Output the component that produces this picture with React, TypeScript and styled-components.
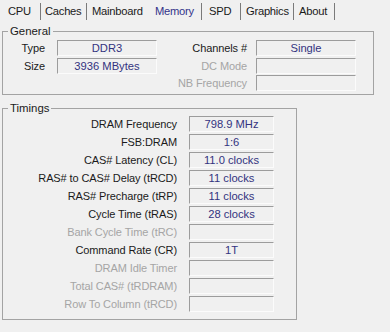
import React from 'react'
import styled, { createGlobalStyle } from 'styled-components'

const GlobalStyle = createGlobalStyle`
  html, body {
    margin: 0;
    padding: 0;
    background: #f0f0f0;
  }
  body {
    font-family: "Liberation Sans", Arial, sans-serif;
    font-size: 11px;
    color: #111;
  }
`

const Window = styled.div`
  width: 390px;
  height: 332px;
  padding-left: 2px;
  box-sizing: border-box;
  overflow: hidden;
`

const TabBar = styled.div`
  display: flex;
  height: 22px;
`

const Tab = styled.div<{ $w: number; $pl: number; $sep: boolean; $active?: boolean }>`
  box-sizing: border-box;
  width: ${(p) => p.$w}px;
  padding-left: ${(p) => p.$pl}px;
  margin-top: 3px;
  height: 17px;
  line-height: 17px;
  font-size: 11.2px;
  letter-spacing: -0.25px;
  color: ${(p) => (p.$active ? '#33338a' : '#1a1a1a')};
  border-right: ${(p) => (p.$sep ? '1px solid #7a7a7a' : 'none')};
  white-space: nowrap;
`

const Group = styled.fieldset<{ $w: number; $top: number }>`
  box-sizing: border-box;
  width: ${(p) => p.$w}px;
  margin: ${(p) => p.$top}px 0 0 0;
  padding: 0;
  border: 1px solid #a3a3a3;
  min-width: 0;
`

const Legend = styled.legend`
  margin-left: 5px;
  padding: 0 2px;
  font-size: 11.4px;
  line-height: 12px;
  color: #1a1a1a;
`

const GeneralGrid = styled.div`
  display: grid;
  grid-template-columns: 54px 100px 99px 100px;
  grid-auto-rows: 16px;
  row-gap: 1.5px;
  padding: 3px 0 3px 0;
`

const TimingsGrid = styled.div`
  display: grid;
  grid-template-columns: 186px 85px;
  grid-auto-rows: 16px;
  row-gap: 2px;
  padding: 2px 0 7px 0;
`

const Label = styled.div<{ $pr: number; $off?: boolean; $col?: number }>`
  grid-column: ${(p) => (p.$col ? `${p.$col}` : 'auto')};
  text-align: right;
  padding-right: ${(p) => p.$pr}px;
  line-height: 16px;
  white-space: nowrap;
  color: ${(p) => (p.$off ? '#a5a5a5' : '#1a1a1a')};
  font-size: 11px;
  letter-spacing: -0.1px;
`

const Field = styled.div`
  box-sizing: border-box;
  height: 16px;
  border-top: 1px solid #9c9c9c;
  border-left: 1px solid #9c9c9c;
  border-right: 1px solid #fbfbfb;
  border-bottom: 1px solid #fbfbfb;
  text-align: center;
  line-height: 14px;
  color: #33337f;
  font-size: 11.2px;
  white-space: nowrap;
`

const tabs = [
  { name: 'CPU', w: 39, pl: 6, sep: true },
  { name: 'Caches', w: 46, pl: 4, sep: true },
  { name: 'Mainboard', w: 63, pl: 5, sep: false },
  { name: 'Memory', w: 52, pl: 5, sep: true, active: true },
  { name: 'SPD', w: 39, pl: 7, sep: true },
  { name: 'Graphics', w: 53, pl: 5, sep: true },
  { name: 'About', w: 41, pl: 5, sep: true },
]

const timings: { label: string; value?: string; off?: boolean }[] = [
  { label: 'DRAM Frequency', value: '798.9 MHz' },
  { label: 'FSB:DRAM', value: '1:6' },
  { label: 'CAS# Latency (CL)', value: '11.0 clocks' },
  { label: 'RAS# to CAS# Delay (tRCD)', value: '11 clocks' },
  { label: 'RAS# Precharge (tRP)', value: '11 clocks' },
  { label: 'Cycle Time (tRAS)', value: '28 clocks' },
  { label: 'Bank Cycle Time (tRC)', off: true },
  { label: 'Command Rate (CR)', value: '1T' },
  { label: 'DRAM Idle Timer', off: true },
  { label: 'Total CAS# (tRDRAM)', off: true },
  { label: 'Row To Column (tRCD)', off: true },
]

const App = () => (
  <Window>
    <GlobalStyle />
    <TabBar>
      {tabs.map((t) => (
        <Tab key={t.name} $w={t.w} $pl={t.pl} $sep={t.sep} $active={t.active}>
          {t.name}
        </Tab>
      ))}
    </TabBar>

    <Group $w={372} $top={3}>
      <Legend>General</Legend>
      <GeneralGrid>
        <Label $pr={12}>Type</Label>
        <Field>DDR3</Field>
        <Label $pr={9}>Channels #</Label>
        <Field>Single</Field>
        <Label $pr={12}>Size</Label>
        <Field>3936 MBytes</Field>
        <Label $pr={9} $off>DC Mode</Label>
        <Field />
        <Label $pr={9} $off $col={3}>NB Frequency</Label>
        <Field />
      </GeneralGrid>
    </Group>

    <Group $w={295} $top={7}>
      <Legend>Timings</Legend>
      <TimingsGrid>
        {timings.map((r) => (
          <React.Fragment key={r.label}>
            <Label $pr={12} $off={r.off}>{r.label}</Label>
            <Field>{r.value}</Field>
          </React.Fragment>
        ))}
      </TimingsGrid>
    </Group>
  </Window>
)

export default App
